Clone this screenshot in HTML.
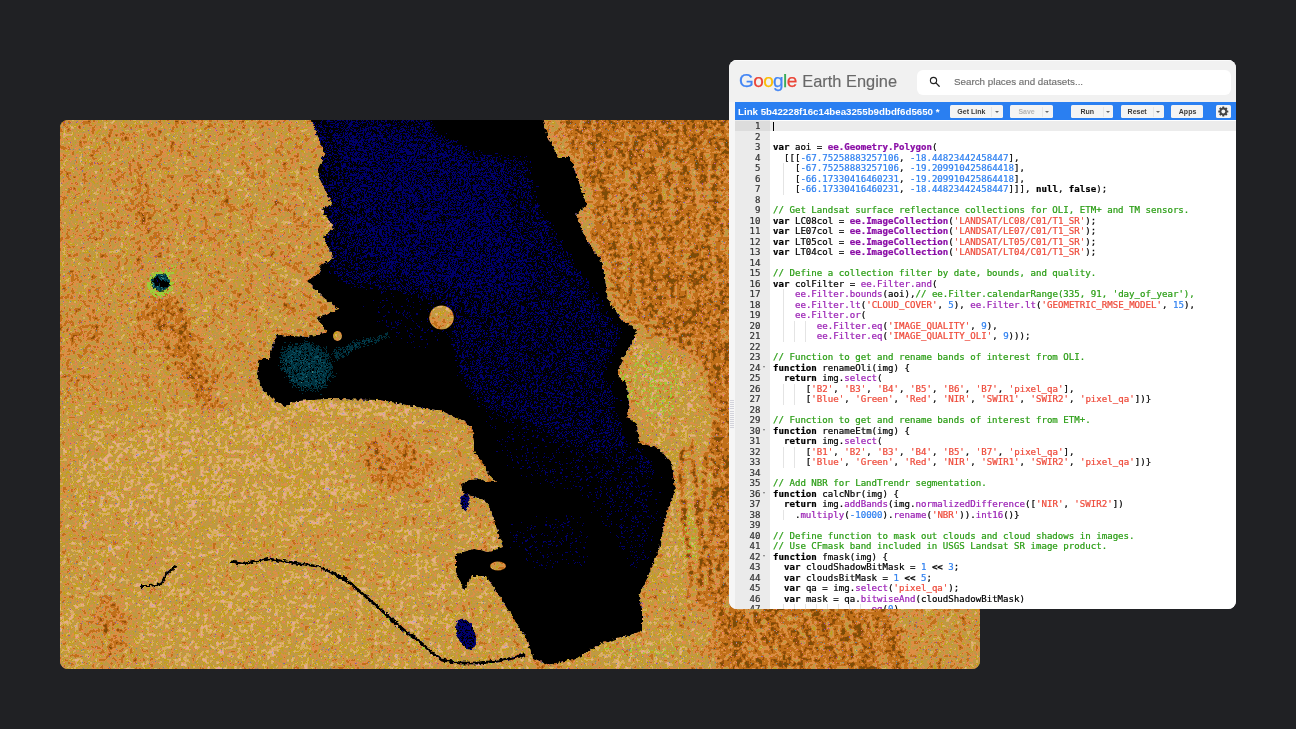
<!DOCTYPE html>
<html lang="en">
<head>
<meta charset="utf-8">
<title>Google Earth Engine</title>
<style>
html,body{margin:0;padding:0;}
body{width:1296px;height:729px;background:#202124;overflow:hidden;position:relative;font-family:"Liberation Sans",sans-serif;}
#sat{position:absolute;left:60px;top:120px;width:920px;height:549px;border-radius:8px;overflow:hidden;background:#c39843;}
#sat svg{display:block;}
#panel{position:absolute;left:729px;top:60px;width:507px;height:549px;border-radius:8px;overflow:hidden;background:#fff;}
#hdr{position:absolute;left:0;top:0;width:507px;height:42.5px;background:#f1f1f1;border-top:1px solid #fbfbfb;box-sizing:border-box;}
#logo{position:absolute;left:10.1px;top:9.0px;will-change:transform;height:22px;line-height:22px;font-size:19px;letter-spacing:-0.62px;white-space:nowrap;-webkit-text-stroke:0.25px currentColor;}
#logo span{display:inline-block;}
#logo .ee{color:#686868;margin-left:5.7px;font-size:16.4px;letter-spacing:0px;-webkit-text-stroke:0.15px currentColor;}
#search{position:absolute;left:188px;top:9.2px;width:314px;height:25px;border-radius:6px;background:#fff;}
#search svg{position:absolute;left:12px;top:6.3px;}
#search span{will-change:transform;position:absolute;left:36.5px;top:0;line-height:24.2px;font-size:9.8px;color:#707070;-webkit-text-stroke:0.15px currentColor;white-space:nowrap;}
#bar{position:absolute;left:6px;top:42.3px;width:501px;height:17.7px;background:#2a7ff1;}
#bar .title{position:absolute;left:3.4px;top:0.9px;will-change:transform;line-height:17.8px;font-size:9.72px;font-weight:bold;color:#fff;white-space:nowrap;}
.btn{position:absolute;top:2.6px;will-change:transform;height:13px;box-sizing:border-box;background:#f4f4f4;border-radius:1.5px;font-size:7px;font-weight:bold;color:#3a3a3a;line-height:13px;white-space:nowrap;}
.btn span{position:absolute;top:0;}
.btn .dv{position:absolute;top:1.5px;width:0;height:10px;border-left:1px solid #e6e6e6;}
.btn .ar{position:absolute;top:6.3px;width:0;height:0;border-left:2.4px solid transparent;border-right:2.4px solid transparent;border-top:2.6px solid #666;}
.btn.dis .ar{border-top-color:#6a6a6a;}
.btn.dis{color:#b4b4b4;}
#ed{position:absolute;left:6px;top:60px;width:501px;height:489px;background:#fff;overflow:hidden;}
#strip{position:absolute;left:0;top:42px;width:6px;height:507px;background:#f6f6f6;}
#grip{position:absolute;left:1.2px;top:339.5px;width:3.8px;height:28px;background:repeating-linear-gradient(to bottom,#d2d2da 0,#d2d2da 1px,rgba(0,0,0,0) 1px,rgba(0,0,0,0) 2.1px);}
#gut{position:absolute;left:0;top:0;width:35px;height:500px;background:#ebebeb;}
#act{position:absolute;left:0;top:0.5px;width:501px;height:10.6px;background:#ececec;}
#actg{position:absolute;left:0;top:0.5px;width:35px;height:10.6px;background:#dcdcdc;}
#nums,#code{position:absolute;top:1.3px;will-change:transform;-webkit-text-stroke:0.22px currentColor;font-family:"DejaVu Sans Mono","Liberation Mono",monospace;font-size:9.1px;line-height:10.5px;letter-spacing:0.003px;white-space:pre;color:#000;}
#nums{left:0;width:25.4px;text-align:right;color:#333;}
#nums div,#code div{height:10.5px;}
#nums .f{position:relative;}
#nums .f:after{content:"";position:absolute;left:28px;top:3.7px;border-left:1.9px solid transparent;border-right:1.9px solid transparent;border-top:2.7px solid #777;}
#code{left:37.9px;}
#code i{font-style:normal;}
#code .p{color:#9a1fb4;}
#code b.p{color:#8a0ea6;}
#code .n{color:#2f80f0;}
#code .s{color:#ee4a3a;}
#code .c{color:#2a9d14;}
#code .ig{position:absolute;width:0;height:10.5px;border-left:1px solid #e4e4e4;}
#cur{position:absolute;left:38.2px;top:1.6px;width:1px;height:9px;background:#000;}
</style>
</head>
<body>
<div id="sat">
<svg width="920" height="549" viewBox="60 120 920 549">
<defs>
<filter id="landF" x="60" y="120" width="920" height="549" filterUnits="userSpaceOnUse" color-interpolation-filters="sRGB">
<feTurbulence type="fractalNoise" baseFrequency="0.24" numOctaves="2" seed="2" result="t1"/>
<feColorMatrix in="t1" type="matrix" values="1 0 0 0 0  1 0 0 0 0  1 0 0 0 0  0 0 0 0 1" result="hf"/>
<feTurbulence type="fractalNoise" baseFrequency="0.09 0.07" numOctaves="2" seed="11" result="t2"/>
<feColorMatrix in="t2" type="matrix" values="1 0 0 0 0  1 0 0 0 0  1 0 0 0 0  0 0 0 0 1" result="lf"/>
<feComposite in="SourceGraphic" in2="hf" operator="arithmetic" k1="0" k2="1" k3="1.0" k4="-0.5" result="s1"/>
<feComposite in="s1" in2="lf" operator="arithmetic" k1="0" k2="1" k3="0.45" k4="-0.225" result="s2"/>
<feComponentTransfer in="s2" result="pal">
<feFuncR type="discrete" tableValues="0.49 0.59 0.59 0.59 0.59 0.76 0.76 0.76 0.76 0.76 0.76 0.76 0.76 0.76 0.76 0.87 0.87 0.87 0.87 0.87 0.87 0.75 0.75 0.75 0.75 0.75 0.75 0.75 0.75 0.77 0.77 0.77 0.85 0.85 0.85 0.85 0.85 0.85 0.85 0.90 0.90 0.90 0.90 0.90 0.91 0.91 0.91 0.63 0.63 0.63"/>
<feFuncG type="discrete" tableValues="0.30 0.31 0.31 0.31 0.31 0.44 0.44 0.44 0.44 0.44 0.44 0.44 0.44 0.44 0.44 0.56 0.56 0.56 0.56 0.56 0.56 0.60 0.60 0.60 0.60 0.60 0.60 0.60 0.60 0.63 0.63 0.63 0.68 0.68 0.68 0.68 0.68 0.68 0.68 0.69 0.69 0.69 0.69 0.69 0.63 0.63 0.63 0.66 0.66 0.66"/>
<feFuncB type="discrete" tableValues="0.03 0.04 0.04 0.04 0.04 0.10 0.10 0.10 0.10 0.10 0.10 0.10 0.10 0.10 0.10 0.27 0.27 0.27 0.27 0.27 0.27 0.27 0.27 0.27 0.27 0.27 0.27 0.27 0.27 0.09 0.09 0.09 0.38 0.38 0.38 0.38 0.38 0.38 0.38 0.54 0.54 0.54 0.54 0.54 0.63 0.63 0.63 0.75 0.75 0.75"/>
</feComponentTransfer>
<feComposite in="pal" in2="SourceGraphic" operator="in"/>
</filter>
<filter id="waterF" x="40" y="100" width="960" height="588" filterUnits="userSpaceOnUse" color-interpolation-filters="sRGB">
<feTurbulence type="fractalNoise" baseFrequency="0.8" numOctaves="1" seed="5" result="t1"/>
<feColorMatrix in="t1" type="matrix" values="1 0 0 0 0  1 0 0 0 0  1 0 0 0 0  0 0 0 0 1" result="hf"/>
<feComposite in="SourceGraphic" in2="hf" operator="arithmetic" k1="0" k2="1" k3="0.6" k4="-0.3" result="s1"/>
<feComponentTransfer in="s1" result="pal">
<feFuncR type="discrete" tableValues="0.00 0.00 0.00 0.00 0.00 0.00 0.00 0.00 0.00 0.00 0.00 0.00 0.00 0.00 0.00 0.00 0.00 0.00 0.00 0.00 0.00 0.00 0.00 0.00 0.00 0.00 0.00 0.00 0.00 0.00 0.00 0.00 0.00 0.00 0.00 0.00 0.00 0.00 0.00 0.00 0.00 0.04 0.04 0.04 0.04 0.04 0.23 0.23 0.23 0.23"/>
<feFuncG type="discrete" tableValues="0.00 0.00 0.00 0.00 0.00 0.00 0.00 0.00 0.00 0.00 0.00 0.00 0.00 0.00 0.00 0.00 0.00 0.00 0.00 0.00 0.00 0.00 0.00 0.00 0.00 0.00 0.00 0.00 0.00 0.00 0.00 0.00 0.00 0.00 0.00 0.19 0.19 0.19 0.19 0.19 0.19 0.31 0.31 0.31 0.31 0.31 0.54 0.54 0.54 0.54"/>
<feFuncB type="discrete" tableValues="0.42 0.42 0.42 0.42 0.42 0.42 0.42 0.42 0.42 0.42 0.42 0.42 0.42 0.42 0.42 0.00 0.00 0.00 0.00 0.00 0.00 0.00 0.00 0.00 0.00 0.00 0.00 0.00 0.00 0.00 0.00 0.00 0.00 0.00 0.00 0.24 0.24 0.24 0.24 0.24 0.24 0.38 0.38 0.38 0.38 0.38 0.53 0.53 0.53 0.53"/>
</feComponentTransfer>
<feComposite in="pal" in2="SourceGraphic" operator="in" result="cut"/>
<feTurbulence type="fractalNoise" baseFrequency="0.3" numOctaves="2" seed="8" result="dn"/>
<feDisplacementMap in="cut" in2="dn" scale="5" xChannelSelector="R" yChannelSelector="G"/>
</filter>
<filter id="greenF" x="60" y="120" width="920" height="549" filterUnits="userSpaceOnUse" color-interpolation-filters="sRGB">
<feTurbulence type="fractalNoise" baseFrequency="0.4" numOctaves="1" seed="21" result="t1"/>
<feColorMatrix in="t1" type="matrix" values="0 1 0 0 0  0 1 0 0 0  0 1 0 0 0  0 0 0 0 1" result="hf"/>
<feColorMatrix in="SourceGraphic" type="matrix" values="0 0 0 1 0  0 0 0 1 0  0 0 0 1 0  0 0 0 0 1" result="m"/>
<feComposite in="m" in2="hf" operator="arithmetic" k1="0" k2="1" k3="1" k4="-0.5" result="v"/>
<feColorMatrix in="v" type="matrix" values="0 0 0 0 0.62  0 0 0 0 0.80  0 0 0 0 0.22  60 0 0 0 -36"/>
</filter>
<filter id="speckF" x="60" y="120" width="920" height="549" filterUnits="userSpaceOnUse" color-interpolation-filters="sRGB">
<feTurbulence type="fractalNoise" baseFrequency="0.85" numOctaves="1" seed="33" result="t"/>
<feColorMatrix in="t" type="matrix" values="0 0 0 0 0.94  0 0 0 0 0.47  0 0 0 0 0.47  50 0 0 0 -35.5" result="pk"/>
<feColorMatrix in="t" type="matrix" values="0 0 0 0 0.45  0 0 0 0 0.52  0 0 0 0 0.60  0 50 0 0 -36.2" result="bg"/>
<feColorMatrix in="t" type="matrix" values="0 0 0 0 0.60  0 0 0 0 0.28  0 0 0 0 0.70  0 0 50 0 -37" result="pu"/>
<feMerge><feMergeNode in="pk"/><feMergeNode in="bg"/><feMergeNode in="pu"/></feMerge>
</filter>
<filter id="bs" x="60" y="120" width="920" height="549" filterUnits="userSpaceOnUse"><feGaussianBlur stdDeviation="1.6"/></filter>
<filter id="b2" x="-50%" y="-50%" width="200%" height="200%"><feGaussianBlur stdDeviation="2"/></filter>
<filter id="b4" x="-50%" y="-50%" width="200%" height="200%"><feGaussianBlur stdDeviation="4"/></filter>
<filter id="b8" x="-50%" y="-50%" width="200%" height="200%"><feGaussianBlur stdDeviation="8"/></filter>
<filter id="b16" x="-50%" y="-50%" width="200%" height="200%"><feGaussianBlur stdDeviation="16"/></filter>
<clipPath id="lakeClip"><path d="M307,105 L538,105 L548,137 L558,157 L570,157 L577,177 L585,199 L587,205 L576,214 L582,231 L590,246 L600,258 L605,278 L608,300 L622,320 L637,330 L632,344 L622,359 L617,374 L627,386 L629,404 L627,416 L637,424 L639,443 L659,448 L671,463 L674,480 L675,490 L666,515 L659,549 L649,574 L639,596 L642,609 L642,631 L627,636 L602,643 L577,658 L548,665 L533,658 L526,638 L513,618 L498,594 L486,576 L471,576 L464,591 L456,572 L456,554 L474,549 L489,552 L503,547 L489,506 L484,500 L476,497 L467,495 L462,490 L461,484 L469,480 L482,479 L484,482 L496,482 L487,472 L482,462 L474,451 L474,442 L472,427 L461,420 L442,411 L412,406 L380,400 L327,399 L297,401 L285,406 L275,401 L262,389 L257,374 L260,359 L270,359 L272,347 L277,335 L307,337 L327,332 L317,317 L339,310 L327,300 L324,298 L307,281 L322,271 L319,266 L334,258 L323,237 L334,229 L322,209 L332,204 L325,189 L317,172 L325,152 L317,135Z"/></clipPath>
</defs>
<g filter="url(#landF)">
<rect x="60" y="120" width="920" height="549" fill="#717171"/>
<path d="M50,405 L250,402 L300,412 L400,408 L470,432 L482,480 L500,540 L520,620 L545,680 L50,680Z" fill="#828282" filter="url(#b8)"/>
<path d="M80,425 L330,420 L350,470 L330,520 L90,525Z" fill="#919191" filter="url(#b8)"/>
<path d="M552,110 L745,110 L745,612 L716,612 L712,560 L714,480 L712,400 L700,362 L670,342 L640,324 L620,302 L606,262 L592,232 L594,200 L577,160Z" fill="#333333" filter="url(#b4)"/>
<path d="M716,612 L745,600 L895,600 L905,680 L716,680Z" fill="#333333" filter="url(#b4)"/>
<path d="M628,338 L665,346 L695,366 L706,400 L708,480 L700,560 L694,600 L655,600 L658,560 L670,520 L680,480 L668,455 L648,440 L640,400 L630,380Z" fill="#8f8f8f" filter="url(#b4)"/>
<ellipse cx="640" cy="650" rx="60" ry="25" transform="rotate(0 640 650)" fill="#8c8c8c" filter="url(#b8)"/>
<ellipse cx="230" cy="470" rx="150" ry="55" transform="rotate(0 230 470)" fill="#999999" filter="url(#b16)"/>
<ellipse cx="200" cy="620" rx="160" ry="50" transform="rotate(0 200 620)" fill="#919191" filter="url(#b16)"/>
<ellipse cx="420" cy="600" rx="45" ry="60" transform="rotate(0 420 600)" fill="#8f8f8f" filter="url(#b16)"/>
<ellipse cx="350" cy="410" rx="90" ry="10" transform="rotate(5 350 410)" fill="#a3a3a3" filter="url(#b4)"/>
<ellipse cx="395" cy="465" rx="40" ry="28" transform="rotate(30 395 465)" fill="#4c4c4c" filter="url(#b8)"/>
<ellipse cx="110" cy="630" rx="22" ry="35" transform="rotate(0 110 630)" fill="#4c4c4c" filter="url(#b8)"/>
<ellipse cx="80" cy="330" rx="30" ry="30" transform="rotate(0 80 330)" fill="#5c5c5c" filter="url(#b8)"/>
<ellipse cx="145" cy="210" rx="10" ry="45" transform="rotate(-12 145 210)" fill="#4c4c4c" filter="url(#b4)"/>
<ellipse cx="185" cy="350" rx="16" ry="70" transform="rotate(-25 185 350)" fill="#3d3d3d" filter="url(#b4)"/>
<ellipse cx="160" cy="315" rx="18" ry="20" transform="rotate(0 160 315)" fill="#383838" filter="url(#b4)"/>
<g fill="none" stroke-linecap="round" stroke-linejoin="round" filter="url(#bs)">
<path d="M597,124 L599,141 L599,157 L602,171 L604,185 L609,204 L610,216 L616,235" stroke="#212121" stroke-width="6"/>
<path d="M603,143 L602,159 L604,171 L608,185 L610,198 L610,210 L612,220" stroke="#666666" stroke-width="3"/>
<path d="M612,146 L614,169 L617,192 L619,209 L621,234 L623,253 L629,275 L631,298" stroke="#212121" stroke-width="4"/>
<path d="M613,165 L619,184 L619,204 L622,228 L623,249 L624,269 L628,288" stroke="#666666" stroke-width="3"/>
<path d="M626,133 L627,156 L631,186 L636,213 L635,236 L640,260 L642,287 L643,313" stroke="#212121" stroke-width="5"/>
<path d="M626,151 L629,180 L629,203 L634,231 L638,257 L637,279 L639,308" stroke="#666666" stroke-width="3"/>
<path d="M636,156 L639,173 L644,187 L643,203 L647,219 L653,235 L653,250 L657,262" stroke="#212121" stroke-width="6"/>
<path d="M643,177 L642,188 L646,201 L644,214 L647,228 L648,239 L651,252" stroke="#666666" stroke-width="3"/>
<path d="M651,129 L649,140 L653,154 L654,170 L662,181 L661,192 L661,207 L665,223" stroke="#212121" stroke-width="4"/>
<path d="M654,146 L659,158 L659,172 L662,178 L663,188 L666,201 L668,210" stroke="#666666" stroke-width="3"/>
<path d="M661,122 L665,144 L669,162 L669,185 L675,205 L676,229 L682,251 L682,269" stroke="#212121" stroke-width="6"/>
<path d="M670,141 L672,164 L674,180 L671,199 L673,219 L678,243 L681,261" stroke="#666666" stroke-width="3"/>
<path d="M673,144 L681,170 L684,193 L683,221 L688,246 L695,269 L694,298 L699,319" stroke="#212121" stroke-width="4"/>
<path d="M677,163 L682,188 L685,213 L686,239 L686,262 L687,288 L693,308" stroke="#666666" stroke-width="3"/>
<path d="M692,146 L694,160 L693,178 L698,192 L700,210 L699,224 L707,239 L709,253" stroke="#212121" stroke-width="6"/>
<path d="M691,165 L695,182 L699,193 L701,203 L699,218 L701,228 L706,243" stroke="#666666" stroke-width="3"/>
<path d="M703,131 L702,156 L705,184 L708,212 L711,233 L720,260 L718,283 L723,311" stroke="#212121" stroke-width="6"/>
<path d="M709,155 L710,181 L709,203 L715,229 L712,249 L716,273 L716,297" stroke="#666666" stroke-width="3"/>
<path d="M717,141 L719,170 L719,196 L727,217 L730,244 L731,272 L736,292 L737,320" stroke="#212121" stroke-width="5"/>
<path d="M719,163 L719,187 L722,212 L726,236 L727,260 L732,283 L734,308" stroke="#666666" stroke-width="3"/>
<path d="M727,156 L729,170 L736,184 L737,199 L738,211 L741,225 L742,238 L748,251" stroke="#212121" stroke-width="4"/>
<path d="M731,171 L732,184 L737,195 L737,206 L737,223 L742,234 L745,240" stroke="#666666" stroke-width="3"/>
<path d="M683,450 L680,479 L684,501 L684,525 L688,549 L691,578 L688,597" stroke="#212121" stroke-width="5"/>
<path d="M692,444 L694,472 L697,498 L698,525 L703,547 L700,573 L702,602" stroke="#212121" stroke-width="5"/>
<path d="M707,455 L705,474 L703,504 L701,523 L702,550 L700,578 L699,601" stroke="#212121" stroke-width="5"/>
<path d="M715,428 L714,458 L717,487 L711,518 L711,542 L711,569 L710,601" stroke="#212121" stroke-width="5"/>
<path d="M726,439 L727,465 L730,490 L733,516 L736,548 L732,575 L737,601" stroke="#212121" stroke-width="5"/>
<path d="M716,598 L723,617 L731,637 L743,654 L750,673" stroke="#1f1f1f" stroke-width="4"/>
<path d="M725,598 L734,614 L742,637 L752,656 L760,670" stroke="#6b6b6b" stroke-width="3"/>
<path d="M732,601 L735,616 L739,632 L747,652 L750,672" stroke="#1f1f1f" stroke-width="4"/>
<path d="M739,598 L748,614 L757,634 L762,652 L774,670" stroke="#6b6b6b" stroke-width="3"/>
<path d="M750,598 L755,616 L766,637 L774,654 L779,670" stroke="#1f1f1f" stroke-width="5"/>
<path d="M756,599 L761,616 L771,638 L776,652 L787,673" stroke="#6b6b6b" stroke-width="3"/>
<path d="M763,600 L772,617 L775,633 L782,652 L786,672" stroke="#1f1f1f" stroke-width="5"/>
<path d="M770,600 L783,614 L787,636 L798,653 L810,673" stroke="#6b6b6b" stroke-width="3"/>
<path d="M777,597 L785,619 L791,633 L801,655 L804,673" stroke="#1f1f1f" stroke-width="5"/>
<path d="M786,600 L791,618 L802,633 L809,655 L816,671" stroke="#6b6b6b" stroke-width="3"/>
<path d="M794,601 L802,616 L808,634 L813,651 L824,671" stroke="#1f1f1f" stroke-width="4"/>
<path d="M802,598 L807,616 L818,637 L823,654 L830,675" stroke="#6b6b6b" stroke-width="3"/>
<path d="M812,595 L820,616 L828,636 L833,651 L845,670" stroke="#1f1f1f" stroke-width="5"/>
<path d="M818,597 L827,617 L832,633 L839,655 L844,673" stroke="#6b6b6b" stroke-width="3"/>
<path d="M827,600 L833,616 L837,637 L843,654 L847,670" stroke="#1f1f1f" stroke-width="4"/>
<path d="M834,600 L840,614 L850,634 L856,652 L859,674" stroke="#6b6b6b" stroke-width="3"/>
<path d="M843,597 L852,617 L860,637 L863,656 L872,673" stroke="#1f1f1f" stroke-width="5"/>
<path d="M853,600 L857,614 L871,637 L879,654 L885,671" stroke="#6b6b6b" stroke-width="3"/>
<path d="M861,600 L871,615 L876,633 L888,655 L900,673" stroke="#1f1f1f" stroke-width="5"/>
<path d="M869,595 L870,617 L875,636 L886,654 L889,672" stroke="#6b6b6b" stroke-width="3"/>
<path d="M873,597 L886,615 L891,637 L898,654 L913,671" stroke="#1f1f1f" stroke-width="5"/>
<path d="M885,598 L889,615 L902,636 L906,651 L915,673" stroke="#6b6b6b" stroke-width="3"/>
<path d="M214,169 L231,183 L251,197 L269,211" stroke="#b2b2b2" stroke-width="3"/>
<path d="M182,294 L194,305 L208,316 L223,324" stroke="#a8a8a8" stroke-width="3"/>
<path d="M223,286 L232,290 L245,299 L256,306" stroke="#474747" stroke-width="3"/>
<path d="M286,281 L304,293 L326,308 L343,322" stroke="#474747" stroke-width="3"/>
<path d="M275,296 L291,308 L309,320 L324,330" stroke="#4c4c4c" stroke-width="3"/>
<path d="M273,200 L285,207 L294,217 L304,223" stroke="#474747" stroke-width="3"/>
<path d="M157,130 L168,140 L177,146 L190,154" stroke="#4c4c4c" stroke-width="3"/>
<path d="M261,246 L285,262 L308,276 L330,291" stroke="#474747" stroke-width="3"/>
<path d="M293,193 L308,201 L321,212 L334,221" stroke="#a8a8a8" stroke-width="3"/>
<path d="M200,180 L213,192 L228,200 L242,212" stroke="#4c4c4c" stroke-width="3"/>
<path d="M173,200 L185,207 L198,217 L207,222" stroke="#474747" stroke-width="3"/>
<path d="M244,243 L262,258 L282,271 L303,286" stroke="#a8a8a8" stroke-width="3"/>
<path d="M215,159 L228,165 L241,175 L255,186" stroke="#b2b2b2" stroke-width="3"/>
<path d="M248,299 L260,308 L269,314 L281,321" stroke="#a8a8a8" stroke-width="3"/>
<path d="M376,507 L404,494 L426,488 L449,477" stroke="#b2b2b2" stroke-width="3"/>
<path d="M87,652 L97,644 L105,640 L114,631" stroke="#a8a8a8" stroke-width="3"/>
<path d="M251,435 L260,428 L275,426 L285,421" stroke="#b2b2b2" stroke-width="3"/>
<path d="M175,553 L188,543 L206,537 L218,535" stroke="#a8a8a8" stroke-width="3"/>
<path d="M109,439 L124,432 L149,427 L167,423" stroke="#5c5c5c" stroke-width="3"/>
<path d="M239,451 L251,449 L269,440 L278,438" stroke="#a8a8a8" stroke-width="3"/>
<path d="M175,561 L197,556 L217,551 L236,543" stroke="#a8a8a8" stroke-width="3"/>
<path d="M130,468 L146,465 L166,454 L181,451" stroke="#b2b2b2" stroke-width="3"/>
<path d="M292,496 L308,487 L322,481 L339,476" stroke="#b2b2b2" stroke-width="3"/>
<path d="M79,564 L96,555 L114,549 L130,546" stroke="#b2b2b2" stroke-width="3"/>
</g>
</g>
<g filter="url(#greenF)" fill="#fff">
<g opacity="0.7" filter="url(#b2)"><ellipse cx="160" cy="284" rx="15" ry="15"/></g>
<g opacity="0.55" filter="url(#b2)"><ellipse cx="172" cy="268" rx="7" ry="7"/></g>
<g opacity="0.5" filter="url(#b2)"><path d="M306,125 L318,150 L326,190 L333,230 L333,258" fill="none" stroke="#fff" stroke-width="4"/></g>
<g opacity="0.5" filter="url(#b2)"><path d="M548,128 L566,160 L580,190 L586,230 L600,262 L610,300" fill="none" stroke="#fff" stroke-width="5"/></g>
<g opacity="0.55" filter="url(#b2)"><path d="M622,300 L630,260 L636,240" fill="none" stroke="#fff" stroke-width="6"/></g>
<g opacity="0.5" filter="url(#b4)"><ellipse cx="655" cy="385" rx="30" ry="42" transform="rotate(-20 655 385)"/></g>
<g opacity="0.52" filter="url(#b2)"><path d="M618,360 L626,390 L628,420 L640,445" fill="none" stroke="#fff" stroke-width="6"/></g>
<g opacity="0.5" filter="url(#b4)"><ellipse cx="690" cy="540" rx="12" ry="40"/></g>
<g opacity="0.46" filter="url(#b4)"><ellipse cx="640" cy="650" rx="50" ry="14"/></g>
<g opacity="0.52" filter="url(#b2)"><path d="M380,612 L405,633 L430,652 L460,664 L520,660" fill="none" stroke="#fff" stroke-width="7"/></g>
<g opacity="0.48" filter="url(#b2)"><path d="M300,400 L380,402 L440,413 L470,432" fill="none" stroke="#fff" stroke-width="5"/></g>
<g opacity="0.46" filter="url(#b4)"><path d="M150,300 L165,330 L190,370" fill="none" stroke="#fff" stroke-width="8"/></g>
<g opacity="0.44" filter="url(#b4)"><path d="M120,400 L160,440 L230,500" fill="none" stroke="#fff" stroke-width="5"/></g>
</g>
<rect x="60" y="120" width="920" height="549" fill="#000" filter="url(#speckF)"/>
<g filter="url(#waterF)">
<path d="M307,105 L538,105 L548,137 L558,157 L570,157 L577,177 L585,199 L587,205 L576,214 L582,231 L590,246 L600,258 L605,278 L608,300 L622,320 L637,330 L632,344 L622,359 L617,374 L627,386 L629,404 L627,416 L637,424 L639,443 L659,448 L671,463 L674,480 L675,490 L666,515 L659,549 L649,574 L639,596 L642,609 L642,631 L627,636 L602,643 L577,658 L548,665 L533,658 L526,638 L513,618 L498,594 L486,576 L471,576 L464,591 L456,572 L456,554 L474,549 L489,552 L503,547 L489,506 L484,500 L476,497 L467,495 L462,490 L461,484 L469,480 L482,479 L484,482 L496,482 L487,472 L482,462 L474,451 L474,442 L472,427 L461,420 L442,411 L412,406 L380,400 L327,399 L297,401 L285,406 L275,401 L262,389 L257,374 L260,359 L270,359 L272,347 L277,335 L307,337 L327,332 L317,317 L339,310 L327,300 L324,298 L307,281 L322,271 L319,266 L334,258 L323,237 L334,229 L322,209 L332,204 L325,189 L317,172 L325,152 L317,135Z" fill="#808080"/>
<g clip-path="url(#lakeClip)">
<path d="M300,100 L424,100 L440,135 L470,150 L528,157 L540,201 L563,243 L590,280 L598,300 L613,318 L626,330 L620,345 L610,360 L606,375 L616,390 L619,404 L618,418 L626,428 L630,445 L650,452 L660,475 L620,478 L585,465 L560,445 L520,430 L490,415 L470,400 L455,370 L450,340 L435,315 L415,300 L380,292 L340,286 L326,270 L325,240 L322,200 L318,160 L310,135 Z" fill="#525252" filter="url(#b4)"/>
<path d="M340,130 L420,125 L500,170 L520,230 L540,280 L520,300 L440,290 L380,270 L350,240 Z" fill="#4c4c4c" filter="url(#b8)"/>
<path d="M560,450 L630,450 L662,480 L660,520 L650,560 L640,590 L625,560 L600,520 Z" fill="#616161" filter="url(#b8)"/>
<path d="M505,520 L590,512 L592,568 L530,572 L505,548 Z" fill="#666666" filter="url(#b4)"/>
<path d="M480,410 L560,440 L600,470 L590,500 L540,490 L500,460 Z" fill="#636363" filter="url(#b8)"/>
<path d="M365,300 L440,298 L455,335 L425,350 L385,345 Z" fill="#666666" filter="url(#b4)"/>
<path d="M282,345 L310,340 L330,350 L335,375 L325,392 L300,392 L285,380 L278,362 Z" fill="#c2c2c2" filter="url(#b4)"/>
<path d="M330,350 L360,338 L390,332 L392,338 L362,348 L335,362 Z" fill="#b8b8b8" filter="url(#b2)"/>
</g>
<ellipse cx="465" cy="502" rx="4.5" ry="9" transform="rotate(0 465 502)" fill="#424242"/>
<ellipse cx="466" cy="634" rx="9" ry="16" transform="rotate(-20 466 634)" fill="#474747"/>
<ellipse cx="160.7" cy="282.5" rx="9.5" ry="8.5" transform="rotate(0 160.7 282.5)" fill="#d6d6d6"/>
<ellipse cx="164" cy="284" rx="4.5" ry="3.5" transform="rotate(20 164 284)" fill="#808080"/>
<ellipse cx="156.5" cy="281" rx="3" ry="4" transform="rotate(0 156.5 281)" fill="#575757"/>
<path d="M141.5,586 L150,586 L161,584 L166,574 L176,566.5" fill="none" stroke="#808080" stroke-width="2.2" stroke-linejoin="round" stroke-linecap="round"/>
<path d="M232,561.6 L243,564 L258,561 L270,559 L282,561 L295,563 L319,566.5 L330,572 L341.5,578 L351.4,584" fill="none" stroke="#808080" stroke-width="2.4" stroke-linejoin="round" stroke-linecap="round"/>
<path d="M336,575 L346,580" fill="none" stroke="#808080" stroke-width="4" stroke-linejoin="round" stroke-linecap="round"/>
<path d="M351.4,584 L365,596 L380,609 L392,620 L405,631 L418,640 L429,650 L442,660 L460,663 L479,663 L498,661 L513,658 L524,655" fill="none" stroke="#808080" stroke-width="3" stroke-linejoin="round" stroke-linecap="round"/>
</g>
<g filter="url(#landF)">
<ellipse cx="441.5" cy="317.5" rx="12.3" ry="12" fill="#787878"/>
<ellipse cx="337.5" cy="336" rx="4.5" ry="5" fill="#808080"/>
<ellipse cx="498" cy="566" rx="8" ry="4.5" fill="#808080"/>
</g>
</svg>
</div>
<div id="panel">
  <div id="hdr">
    <div id="logo"><span style="color:#4285f4">G</span><span style="color:#ea4335">o</span><span style="color:#fbbc05">o</span><span style="color:#4285f4">g</span><span style="color:#34a853">l</span><span style="color:#ea4335">e</span><span class="ee">Earth Engine</span></div>
    <div id="search">
      <svg width="12" height="12" viewBox="0 0 12 12"><circle cx="4.5" cy="4.5" r="3.1" fill="none" stroke="#222" stroke-width="1.15"/><path d="M6.9 6.9 L10.2 10.2" stroke="#222" stroke-width="1.3" stroke-linecap="round"/></svg>
      <span>Search places and datasets...</span>
    </div>
  </div>
  <div id="strip"></div>
  <div id="grip"></div>
  <div id="bar">
    <div class="title">Link 5b42228f16c14bea3255b9dbdf6d5650 *</div>
    <div class="btn" style="left:214.6px;width:53px"><span style="left:7.3px">Get Link</span><u class="dv" style="left:41px"></u><u class="ar" style="left:44.6px"></u></div>
    <div class="btn dis" style="left:275.4px;width:42.6px"><span style="left:8.4px">Save</span><u class="dv" style="left:31.5px"></u><u class="ar" style="left:34.7px"></u></div>
    <div class="btn" style="left:335.7px;width:42.4px"><span style="left:9.4px">Run</span><u class="dv" style="left:31.5px"></u><u class="ar" style="left:34.6px"></u></div>
    <div class="btn" style="left:386px;width:42.6px"><span style="left:6.6px">Reset</span><u class="dv" style="left:31.5px"></u><u class="ar" style="left:34.8px"></u></div>
    <div class="btn" style="left:436.4px;width:32px"><span style="left:7.8px">Apps</span></div>
    <div class="btn" style="left:480.5px;width:14.6px"><svg width="14.6" height="13" viewBox="0 0 14.6 13" style="position:absolute;left:0;top:0"><g transform="translate(7.3 6.5)"><g fill="#444"><rect x="-1.1" y="-5" width="2.2" height="10" rx=".4"/><rect x="-1.1" y="-5" width="2.2" height="10" rx=".4" transform="rotate(45)"/><rect x="-1.1" y="-5" width="2.2" height="10" rx=".4" transform="rotate(90)"/><rect x="-1.1" y="-5" width="2.2" height="10" rx=".4" transform="rotate(135)"/><circle r="3.7"/></g><circle r="1.9" fill="#f4f4f4"/></g></svg></div>
  </div>
  <div id="ed">
    <div id="gut"></div>
    <div id="act"></div>
    <div id="actg"></div>
    <div id="nums"><div>1</div><div>2</div><div>3</div><div>4</div><div>5</div><div>6</div><div>7</div><div>8</div><div>9</div><div>10</div><div>11</div><div>12</div><div>13</div><div>14</div><div>15</div><div>16</div><div>17</div><div>18</div><div>19</div><div>20</div><div>21</div><div>22</div><div>23</div><div class="f">24</div><div>25</div><div>26</div><div>27</div><div>28</div><div>29</div><div class="f">30</div><div>31</div><div>32</div><div>33</div><div>34</div><div>35</div><div class="f">36</div><div>37</div><div>38</div><div>39</div><div>40</div><div>41</div><div class="f">42</div><div>43</div><div>44</div><div>45</div><div>46</div><div>47</div></div>
    <div id="code"><div></div><div></div><div><b>var</b> aoi = <b class="p">ee.Geometry.Polygon</b>(</div><div>  [[[<i class="n">-67.75258883257106</i>, <i class="n">-18.44823442458447</i>],</div><div>    [<i class="n">-67.75258883257106</i>, <i class="n">-19.209910425864418</i>],</div><div>    [<i class="n">-66.17330416460231</i>, <i class="n">-19.209910425864418</i>],</div><div>    [<i class="n">-66.17330416460231</i>, <i class="n">-18.44823442458447</i>]]], <b>null</b>, <b>false</b>);</div><div></div><div><i class="c">// Get Landsat surface reflectance collections for OLI, ETM+ and TM sensors.</i></div><div><b>var</b> LC08col = <b class="p">ee.ImageCollection</b>(<i class="s">'LANDSAT/LC08/C01/T1_SR'</i>);</div><div><b>var</b> LE07col = <b class="p">ee.ImageCollection</b>(<i class="s">'LANDSAT/LE07/C01/T1_SR'</i>);</div><div><b>var</b> LT05col = <b class="p">ee.ImageCollection</b>(<i class="s">'LANDSAT/LT05/C01/T1_SR'</i>);</div><div><b>var</b> LT04col = <b class="p">ee.ImageCollection</b>(<i class="s">'LANDSAT/LT04/C01/T1_SR'</i>);</div><div></div><div><i class="c">// Define a collection filter by date, bounds, and quality.</i></div><div><b>var</b> colFilter = <i class="p">ee.Filter.and</i>(</div><div>    <i class="p">ee.Filter.bounds</i>(aoi),<i class="c">// ee.Filter.calendarRange(335, 91, 'day_of_year'),</i></div><div>    <i class="p">ee.Filter.lt</i>(<i class="s">'CLOUD_COVER'</i>, <i class="n">5</i>), <i class="p">ee.Filter.lt</i>(<i class="s">'GEOMETRIC_RMSE_MODEL'</i>, <i class="n">15</i>),</div><div>    <i class="p">ee.Filter.or</i>(</div><div>        <i class="p">ee.Filter.eq</i>(<i class="s">'IMAGE_QUALITY'</i>, <i class="n">9</i>),</div><div>        <i class="p">ee.Filter.eq</i>(<i class="s">'IMAGE_QUALITY_OLI'</i>, <i class="n">9</i>)));</div><div></div><div><i class="c">// Function to get and rename bands of interest from OLI.</i></div><div><b>function</b> renameOli(img) {</div><div>  <b>return</b> img.<i class="p">select</i>(</div><div>      [<i class="s">'B2'</i>, <i class="s">'B3'</i>, <i class="s">'B4'</i>, <i class="s">'B5'</i>, <i class="s">'B6'</i>, <i class="s">'B7'</i>, <i class="s">'pixel_qa'</i>],</div><div>      [<i class="s">'Blue'</i>, <i class="s">'Green'</i>, <i class="s">'Red'</i>, <i class="s">'NIR'</i>, <i class="s">'SWIR1'</i>, <i class="s">'SWIR2'</i>, <i class="s">'pixel_qa'</i>])}</div><div></div><div><i class="c">// Function to get and rename bands of interest from ETM+.</i></div><div><b>function</b> renameEtm(img) {</div><div>  <b>return</b> img.<i class="p">select</i>(</div><div>      [<i class="s">'B1'</i>, <i class="s">'B2'</i>, <i class="s">'B3'</i>, <i class="s">'B4'</i>, <i class="s">'B5'</i>, <i class="s">'B7'</i>, <i class="s">'pixel_qa'</i>],</div><div>      [<i class="s">'Blue'</i>, <i class="s">'Green'</i>, <i class="s">'Red'</i>, <i class="s">'NIR'</i>, <i class="s">'SWIR1'</i>, <i class="s">'SWIR2'</i>, <i class="s">'pixel_qa'</i>])}</div><div></div><div><i class="c">// Add NBR for LandTrendr segmentation.</i></div><div><b>function</b> calcNbr(img) {</div><div>  <b>return</b> img.<i class="p">addBands</i>(img.<i class="p">normalizedDifference</i>([<i class="s">'NIR'</i>, <i class="s">'SWIR2'</i>])</div><div>    .<i class="p">multiply</i>(<i class="n">-10000</i>).<i class="p">rename</i>(<i class="s">'NBR'</i>)).<i class="p">int16</i>()}</div><div></div><div><i class="c">// Define function to mask out clouds and cloud shadows in images.</i></div><div><i class="c">// Use CFmask band included in USGS Landsat SR image product.</i></div><div><b>function</b> fmask(img) {</div><div>  <b>var</b> cloudShadowBitMask = <i class="n">1</i> <b>&lt;&lt;</b> <i class="n">3</i>;</div><div>  <b>var</b> cloudsBitMask = <i class="n">1</i> <b>&lt;&lt;</b> <i class="n">5</i>;</div><div>  <b>var</b> qa = img.<i class="p">select</i>(<i class="s">'pixel_qa'</i>);</div><div>  <b>var</b> mask = qa.<i class="p">bitwiseAnd</i>(cloudShadowBitMask)</div><div>                 .<i class="p">eq</i>(<i class="n">0</i>)</div><u class="ig" style="left:10.26px;top:42.00px"></u><u class="ig" style="left:10.26px;top:52.50px"></u><u class="ig" style="left:10.26px;top:63.00px"></u><u class="ig" style="left:10.26px;top:168.00px"></u><u class="ig" style="left:10.26px;top:178.50px"></u><u class="ig" style="left:10.26px;top:189.00px"></u><u class="ig" style="left:10.26px;top:199.50px"></u><u class="ig" style="left:21.21px;top:199.50px"></u><u class="ig" style="left:32.17px;top:199.50px"></u><u class="ig" style="left:10.26px;top:210.00px"></u><u class="ig" style="left:21.21px;top:210.00px"></u><u class="ig" style="left:32.17px;top:210.00px"></u><u class="ig" style="left:10.26px;top:262.50px"></u><u class="ig" style="left:21.21px;top:262.50px"></u><u class="ig" style="left:10.26px;top:273.00px"></u><u class="ig" style="left:21.21px;top:273.00px"></u><u class="ig" style="left:10.26px;top:325.50px"></u><u class="ig" style="left:21.21px;top:325.50px"></u><u class="ig" style="left:10.26px;top:336.00px"></u><u class="ig" style="left:21.21px;top:336.00px"></u><u class="ig" style="left:10.26px;top:388.50px"></u><u class="ig" style="left:10.26px;top:483.00px"></u><u class="ig" style="left:21.21px;top:483.00px"></u><u class="ig" style="left:32.17px;top:483.00px"></u><u class="ig" style="left:43.12px;top:483.00px"></u><u class="ig" style="left:54.08px;top:483.00px"></u><u class="ig" style="left:65.04px;top:483.00px"></u><u class="ig" style="left:75.99px;top:483.00px"></u><u class="ig" style="left:86.95px;top:483.00px"></u></div>
    <div id="cur"></div>
  </div>
</div>
</body>
</html>
